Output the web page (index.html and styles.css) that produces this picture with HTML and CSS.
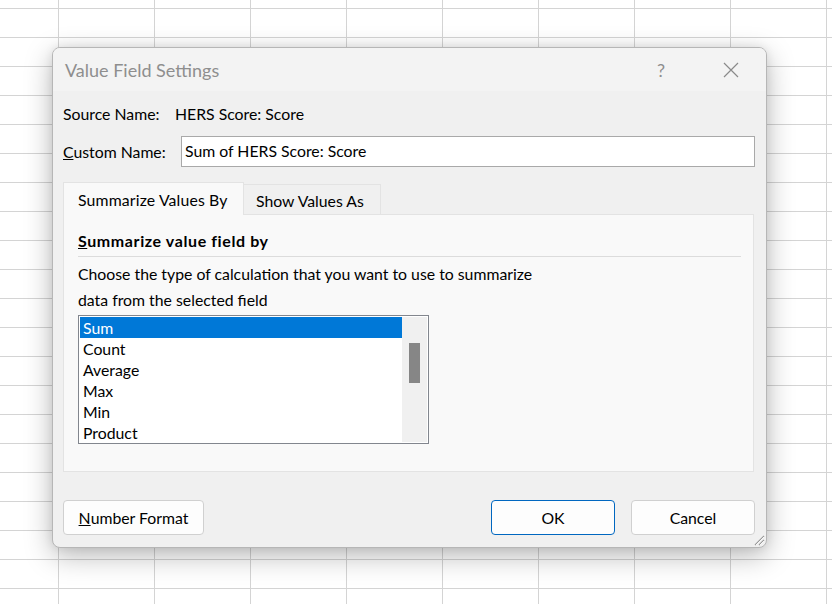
FILE: index.html
```html
<!DOCTYPE html>
<html>
<head>
<meta charset="utf-8">
<link rel="stylesheet" href="styles.css">
</head>
<body>
<div class="sheet"></div>
<div class="dialog">
  <div class="titlebar">
    <span class="title">Value Field Settings</span>
    <span class="help">?</span>
    <svg class="close" width="16" height="16" viewBox="0 0 16 16"><path d="M1 1 L15 15 M15 1 L1 15" stroke="#8a8a8a" stroke-width="1.2" fill="none"/></svg>
  </div>
  <div class="body">
    <div class="row source">
      <span class="label">Source Name:</span>
      <span class="value">HERS Score: Score</span>
    </div>
    <div class="row custom">
      <span class="label"><u>C</u>ustom Name:</span>
      <div class="input">Sum of HERS Score: Score</div>
    </div>
    <div class="tabs">
      <div class="tab active">Summarize Values By</div>
      <div class="tab">Show Values As</div>
    </div>
    <div class="panel">
      <div class="heading"><u>S</u>ummarize value field by</div>
      <div class="sep"></div>
      <div class="desc first">Choose the type of calculation that you want to use to summarize</div>
      <div class="desc">data from the selected field</div>
      <div class="list">
        <div class="items">
          <div class="item selected">Sum</div>
          <div class="item">Count</div>
          <div class="item">Average</div>
          <div class="item">Max</div>
          <div class="item">Min</div>
          <div class="item">Product</div>
        </div>
        <div class="scroll"><div class="thumb"></div></div>
      </div>
    </div>
    <div class="buttons">
      <div class="btn numfmt"><u>N</u>umber Format</div>
      <div class="spacer"></div>
      <div class="btn primary">OK</div>
      <div class="btn">Cancel</div>
    </div>
  </div>
  <svg class="grip" width="14" height="14" viewBox="0 0 14 14"><path d="M13 4 L4 13 M13 8 L8 13" stroke="#9a9a9a" stroke-width="1.2" fill="none"/><path d="M13 5 L5 13 M13 9 L9 13" stroke="#ffffff" stroke-width="0.8" fill="none"/></svg>
</div>
</body>
</html>
```
FILE: styles.css
```css
* { box-sizing: border-box; }
html, body { margin: 0; padding: 0; }
body {
  width: 832px;
  height: 604px;
  overflow: hidden;
  position: relative;
  background: #ffffff;
  font-family: "Lato", "Noto Sans", sans-serif;
  font-size: 15.8px;
  color: #000;
}
.sheet {
  width: 832px;
  height: 604px;
  background-color: #fff;
  background-image:
    linear-gradient(to right, #d4d4d4 1px, transparent 1px),
    linear-gradient(to bottom, #d4d4d4 1px, transparent 1px);
  background-size: 96px 29px, 96px 29px;
  background-position: 58px 8px, 58px 8px;
}
.dialog {
  position: absolute;
  left: 52px;
  top: 47px;
  width: 715px;
  height: 501px;
  border: 1px solid #b6b6b6;
  border-radius: 8px;
  background: #f0f0f0;
  box-shadow: 0 8px 28px rgba(0,0,0,0.28), 0 0 10px rgba(0,0,0,0.08);
  overflow: hidden;
  display: flex;
  flex-direction: column;
}
.titlebar {
  height: 43px;
  flex: none;
  background: #f3f3f3;
  display: flex;
  align-items: center;
  padding-left: 12px;
}
.title {
  font-size: 18px;
  color: #8e8e8e;
  flex: 1;
}
.help {
  font-size: 18px;
  color: #8e8e8e;
  width: 14px;
  margin-right: 52px;
}
.close {
  margin-right: 27px;
}
.body {
  padding: 12px 11px 0 10px;
  display: flex;
  flex-direction: column;
}
.row {
  display: flex;
  align-items: center;
}
.source { height: 20px; }
.source .label { width: 112px; }
.custom { margin-top: 13px; height: 31px; }
.custom .label { width: 118px; }
.input {
  flex: 1;
  height: 31px;
  background: #fff;
  border: 1px solid #a9a9a9;
  padding: 0 0 2px 3px;
  display: flex;
  align-items: center;
}
.tabs {
  margin-top: 15px;
  display: flex;
  align-items: flex-end;
  height: 32px;
}
.tab {
  height: 30px;
  padding: 0 13px 0 12px;
  border: 1px solid #e3e3e3;
  border-bottom: none;
  background: #f0f0f0;
  display: flex;
  align-items: center;
  padding-top: 1px;
}
.tab.active {
  height: 33px;
  margin-bottom: -1px;
  position: relative;
  z-index: 1;
  background: #f9f9f9;
  width: 181px;
  padding-left: 14px;
  padding-top: 0;
  letter-spacing: 0.15px;
}
.tab.active + .tab { width: 137px; border-left: none; }
.panel {
  height: 258px;
  background: #f9f9f9;
  border: 1px solid #e3e3e3;
  margin-right: 1px;
  padding: 16px 12px 0 14px;
}
.heading {
  font-weight: bold;
  font-size: 16px;
  letter-spacing: 0.6px;
  height: 20px;
  line-height: 20px;
}
.sep {
  height: 1px;
  background: #dcdcdc;
  margin-top: 5px;
}
.desc {
  height: 26px;
  line-height: 26px;
}
.desc.first { margin-top: 4px; }
.list {
  margin-top: 2px;
  width: 351px;
  height: 129px;
  border: 1px solid #82868e;
  background: #fff;
  padding: 1px;
  display: flex;
}
.items {
  width: 322px;
}
.item {
  height: 21px;
  line-height: 21px;
  padding-left: 3px;
}
.item.selected {
  background: #0078d7;
  color: #fff;
}
.scroll {
  flex: 1;
  background: #f0f0f0;
  position: relative;
}
.thumb {
  position: absolute;
  left: 7px;
  top: 26px;
  width: 11px;
  height: 40px;
  background: #868686;
}
.buttons {
  margin-top: 28px;
  display: flex;
  gap: 16px;
  height: 35px;
}
.spacer { flex: 1; }
.btn {
  width: 124px;
  height: 35px;
  background: #fdfdfd;
  border: 1px solid #d0d0d0;
  border-radius: 4px;
  display: flex;
  align-items: center;
  justify-content: center;
}
.btn.numfmt { width: 141px; }
.btn.primary { border-color: #0067c0; }
.grip {
  position: absolute;
  right: 1px;
  bottom: 1px;
}
```
